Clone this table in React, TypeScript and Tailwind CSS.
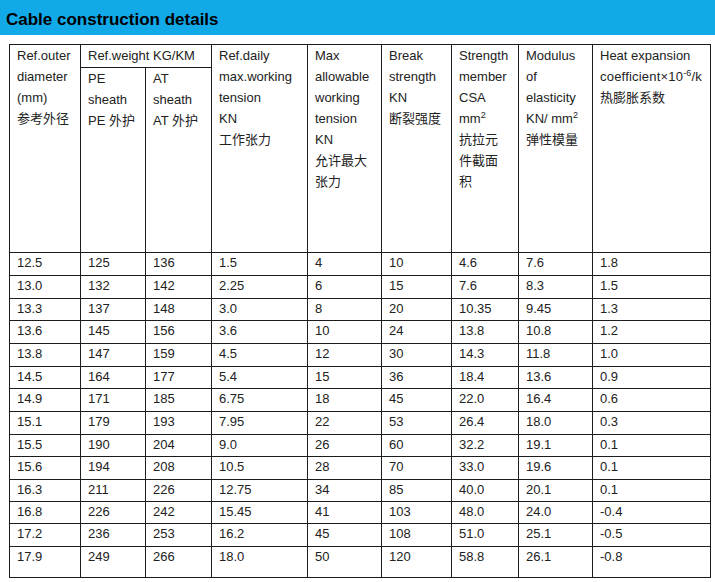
import React from "react";

const rows: string[][] = [
  ["12.5", "125", "136", "1.5", "4", "10", "4.6", "7.6", "1.8"],
  ["13.0", "132", "142", "2.25", "6", "15", "7.6", "8.3", "1.5"],
  ["13.3", "137", "148", "3.0", "8", "20", "10.35", "9.45", "1.3"],
  ["13.6", "145", "156", "3.6", "10", "24", "13.8", "10.8", "1.2"],
  ["13.8", "147", "159", "4.5", "12", "30", "14.3", "11.8", "1.0"],
  ["14.5", "164", "177", "5.4", "15", "36", "18.4", "13.6", "0.9"],
  ["14.9", "171", "185", "6.75", "18", "45", "22.0", "16.4", "0.6"],
  ["15.1", "179", "193", "7.95", "22", "53", "26.4", "18.0", "0.3"],
  ["15.5", "190", "204", "9.0", "26", "60", "32.2", "19.1", "0.1"],
  ["15.6", "194", "208", "10.5", "28", "70", "33.0", "19.6", "0.1"],
  ["16.3", "211", "226", "12.75", "34", "85", "40.0", "20.1", "0.1"],
  ["16.8", "226", "242", "15.45", "41", "103", "48.0", "24.0", "-0.4"],
  ["17.2", "236", "253", "16.2", "45", "108", "51.0", "25.1", "-0.5"],
  ["17.9", "249", "266", "18.0", "50", "120", "58.8", "26.1", "-0.8"],
];

const heights = [
  "h-[23px]", "h-[23px]", "h-[22px]", "h-[23px]", "h-[23px]", "h-[22px]", "h-[23px]",
  "h-[23px]", "h-[22px]", "h-[23px]", "h-[22px]", "h-[22px]", "h-[23px]", "h-[31px]",
];

const widths = ["w-[71px]", "w-[65px]", "w-[66px]", "w-[96px]", "w-[74px]", "w-[70px]", "w-[67px]", "w-[74px]", "w-[118px]"];

const th = "border border-[#1c1c1c] align-top text-left font-normal pl-[7px] pr-0 pt-0 leading-[21px]";
const td = "border border-[#1c1c1c] align-top pl-[7px] pt-0 leading-[19px]";

function Lines({ items }: { items: React.ReactNode[] }) {
  return (
    <>
      {items.map((t, i) => (
        <div key={i} className="whitespace-nowrap">
          {t}
        </div>
      ))}
    </>
  );
}

const Sup = ({ children }: { children: React.ReactNode }) => (
  <sup className="text-[9px] relative top-[-5px] align-baseline">{children}</sup>
);

export default function App() {
  return (
    <div
      className="w-[715px] h-[582px] bg-white text-[#222] text-[13px]"
      style={{ fontFamily: '"Liberation Sans", Arial, "Noto Sans CJK SC", sans-serif' }}
    >
      <div className="h-[35px] bg-[#12a9e8] pl-[6px] pt-[10px]">
        <h1 className="text-[17px] font-bold text-black leading-[20px]">Cable construction details</h1>
      </div>
      <div className="pl-[9px] pt-[9px]">
        <table className="border-collapse w-[701px] table-fixed">
          <colgroup>
            {widths.map((w, i) => (
              <col key={i} className={w} />
            ))}
          </colgroup>
          <thead>
            <tr className="h-[23px]">
              <th rowSpan={2} className={th}>
                <Lines items={["Ref.outer", "diameter", "(mm)", "参考外径"]} />
              </th>
              <th colSpan={2} className={th}>
                <span className="whitespace-nowrap">Ref.weight KG/KM</span>
              </th>
              <th rowSpan={2} className={th}>
                <Lines items={["Ref.daily", "max.working", "tension", "KN", "工作张力"]} />
              </th>
              <th rowSpan={2} className={th}>
                <Lines items={["Max", "allowable", "working", "tension", "KN", "允许最大", "张力"]} />
              </th>
              <th rowSpan={2} className={th}>
                <Lines items={["Break", "strength", "KN", "断裂强度"]} />
              </th>
              <th rowSpan={2} className={th}>
                <Lines
                  items={[
                    "Strength",
                    "member",
                    "CSA",
                    <>
                      mm<Sup>2</Sup>
                    </>,
                    "抗拉元",
                    "件截面",
                    "积",
                  ]}
                />
              </th>
              <th rowSpan={2} className={th}>
                <Lines
                  items={[
                    "Modulus",
                    "of",
                    "elasticity",
                    <>
                      KN/ mm<Sup>2</Sup>
                    </>,
                    "弹性模量",
                  ]}
                />
              </th>
              <th rowSpan={2} className={th}>
                <Lines
                  items={[
                    "Heat expansion",
                    <span className="tracking-[0.2px]">
                      coefficient×10<Sup>-6</Sup>/k
                    </span>,
                    "热膨胀系数",
                  ]}
                />
              </th>
            </tr>
            <tr className="h-[185px]">
              <th className={th}>
                <Lines items={["PE", "sheath", "PE 外护"]} />
              </th>
              <th className={th}>
                <Lines items={["AT", "sheath", "AT 外护"]} />
              </th>
            </tr>
          </thead>
          <tbody>
            {rows.map((r, i) => (
              <tr key={i} className={heights[i]}>
                {r.map((c, j) => (
                  <td key={j} className={td}>
                    {c}
                  </td>
                ))}
              </tr>
            ))}
          </tbody>
        </table>
      </div>
    </div>
  );
}
